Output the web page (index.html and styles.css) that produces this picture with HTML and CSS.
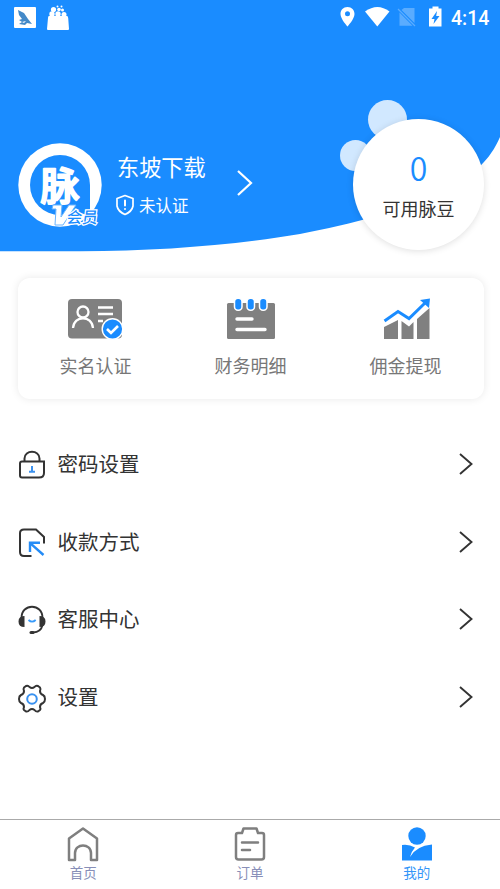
FILE: index.html
```html
<!DOCTYPE html>
<html lang="zh-CN">
<head>
<meta charset="utf-8">
<title>我的</title>
<link rel="stylesheet" href="styles.css">
</head>
<body>
<div class="app">
  <header class="hero">
    <svg class="hero-bg" viewBox="0 0 500 260"><path fill="#1a8cff" d="M0 0H500V137C490 160 474 175 448 188C405 211 352 224 300 234C235 245 160 251 80 251.300H0Z"/></svg>
    <div class="status">
      <svg class="status-apps" viewBox="0 0 60 30" fill="#fff">
        <rect x="0" y="4" width="22" height="21" rx="1"/>
        <path fill="#4389c8" d="M4 7L10 10L14 16L18 21L13 20L11 22L5 21L8 19L5 17L8 16L5 12Z"/>
        <path fill="#fff" d="M8 19L12 18L10 20Z"/>
        <path d="M35 13H53Q54 13 54.200 15L55 26Q55 27 54 27H34Q33 27 33 26L34 15Q34 13 35 13Z"/>
        <circle cx="38" cy="11" r="2.700"/><circle cx="44" cy="11" r="2.700"/><circle cx="50" cy="11.500" r="2.500"/><circle cx="39.500" cy="6.500" r="2.600"/><circle cx="45" cy="6.500" r="1.800"/><circle cx="48.500" cy="7" r="1.500"/><circle cx="43.500" cy="3.500" r="1"/><circle cx="47.500" cy="3.500" r="1"/>
      </svg>
      <svg class="status-icons" viewBox="0 0 110 30" fill="#fff">
        <path fill-rule="evenodd" d="M7.500 4C3.300 4 .5 7 .5 11C.5 16 7.500 23.500 7.500 23.500S14.500 16 14.500 11C14.500 7 11.700 4 7.500 4ZM7.500 8.200A2.500 2.500 0 1 1 7.500 13.200A2.500 2.500 0 1 1 7.500 8.200Z"/>
        <path d="M25 8.500Q37.500-.5 49.500 8.500L37.300 23.500Z"/>
        <path fill="#5aacff" d="M64 5H74.500V20L61.500 7ZM59.500 9.500V22.800H72.500Z"/>
        <path stroke="#5aacff" stroke-width="1.300" d="M58 6L75 23"/>
        <path fill-rule="evenodd" d="M92.500 3.500H98.500V5.500H101.500V23.500H89V5.500H92.500ZM97 8L91.500 16H94.500L93.500 21L99.500 13H96.200Z"/>
      </svg>
      <span class="clock">4:14</span>
    </div>
    <div class="profile">
      <svg class="avatar" viewBox="0 0 84 84">
        <circle cx="42" cy="42" r="41.700" fill="#fff"/>
        <path fill="#1a8cff" d="M42 12A30 30 0 0 1 72 42V72H42A30 30 0 0 1 42 12Z"/>
        <text class="logo-main" x="22.500" y="57">脉</text>
        <path class="logo-v" d="M35 62H44L43 74L51 62H58L45 82H37L38 66H34Z"/>
        <text class="logo-member" transform="translate(48 80) skewX(-8)">会员</text>
      </svg>
      <div class="identity">
        <div class="name">东坡下载</div>
        <div class="verify">
          <svg class="shield" viewBox="0 0 18 22" fill="none" stroke="#fff" stroke-width="1.700" stroke-linejoin="round" stroke-linecap="round"><path d="M9 1.500L17 4.500V12Q16 17.500 9 20.500Q2 17.500 1 12V4.500Z"/><path stroke-width="2" d="M9 6.500V11.500M9 15V15.100"/></svg>
          <span>未认证</span>
        </div>
      </div>
      <svg class="profile-arrow" viewBox="0 0 18 28" fill="none" stroke="#fff" stroke-width="2.200"><path d="M2 2L15 14L2 26"/></svg>
    </div>
    <div class="bubble bubble-large"></div>
    <div class="bubble bubble-small"></div>
    <div class="balance"><div class="amount">0</div><div class="unit">可用脉豆</div></div>
  </header>

  <section class="card">
    <div class="action">
      <svg viewBox="0 0 56 44">
        <rect x="0" y="1" width="54" height="39.500" rx="4" fill="#808080"/>
        <g fill="none" stroke="#fff" stroke-width="2.300"><circle cx="15" cy="14" r="5.500"/><path d="M5 30C6 17 24 17 25 30M30 9.500H45M30 16H45M30 23H35"/></g>
        <circle cx="44.500" cy="31" r="10.300" fill="#1a8cff" stroke="#fff" stroke-width="1.400"/>
        <path d="M39 31L43 35L50 28" fill="none" stroke="#fff" stroke-width="2.600"/>
      </svg>
      <span>实名认证</span>
    </div>
    <div class="action">
      <svg viewBox="0 0 56 44">
        <rect x="4" y="5" width="48" height="36" rx="1.500" fill="#808080"/>
        <g fill="#1a8cff" stroke="#fff" stroke-width="1.500"><rect x="11.500" y=".3" width="7.500" height="12" rx="3.500"/><rect x="24" y=".3" width="7.500" height="12" rx="3.500"/><rect x="36.500" y=".3" width="7.500" height="12" rx="3.500"/></g>
        <path d="M14 21H29M14 31.500H42" stroke="#fff" stroke-width="3.400" stroke-linecap="round"/>
      </svg>
      <span>财务明细</span>
    </div>
    <div class="action">
      <svg viewBox="0 0 56 44" fill="#808080">
        <path d="M6 29L20 22V41H6ZM23.500 23L31 28.500L35.500 24V41H23.500ZM39 21L51.500 10V41H39Z"/>
        <path d="M6.500 23L20 13.500L31 20.500L47 5" fill="none" stroke="#1a8cff" stroke-width="3"/><path fill="#1a8cff" d="M42 2L52 .5L51 10Z"/>
      </svg>
      <span>佣金提现</span>
    </div>
  </section>

  <nav class="menu">
    <div class="row">
      <svg class="row-icon" viewBox="0 0 28 32" fill="none" stroke="#333" stroke-width="2"><path d="M6.500 12V9.500C6.500 .5 21.500 .5 21.500 9.500V12M4 12.500H26V24Q26 28.500 21 28.500H4Q2 28.500 2 26.500V14.500Q2 12.500 4 12.500Z"/><path stroke="#3b91ee" d="M14 17V22.500M11 22.700H17"/></svg>
      <span>密码设置</span>
      <svg class="chevron" viewBox="0 0 14 22"><path d="M1 1L12.500 11L1 21"/></svg>
    </div>
    <div class="row">
      <svg class="row-icon" viewBox="0 0 28 32" fill="none" stroke="#333" stroke-width="2"><path d="M13.500 29H6Q2 29 2 25V6Q2 2.500 6 2.500H18L26 10V16.500"/><path stroke="#258cf6" stroke-width="2.400" d="M12 25V15.800H22M13 16.800L25.500 28"/></svg>
      <span>收款方式</span>
      <svg class="chevron" viewBox="0 0 14 22"><path d="M1 1L12.500 11L1 21"/></svg>
    </div>
    <div class="row">
      <svg class="row-icon" viewBox="0 0 28 32" fill="none" stroke="#333" stroke-width="1.900"><path d="M3.500 14C3.500-1 24.500-1 24.500 14M24.500 21Q23 28 15 28.500"/><path fill="#333" stroke="none" d="M6.500 12V23Q.5 23 .5 17.500Q.5 12 6.500 12ZM21.500 12Q27.500 12 27.500 17.500Q27.500 23 21.500 23Z"/><path stroke-width="3" stroke-linecap="round" d="M13 28.500H15"/><path stroke="#389bfa" stroke-width="1.800" d="M10.500 16Q14 19.300 17.700 16"/></svg>
      <span>客服中心</span>
      <svg class="chevron" viewBox="0 0 14 22"><path d="M1 1L12.500 11L1 21"/></svg>
    </div>
    <div class="row">
      <svg class="row-icon" viewBox="0 0 28 32" fill="none" stroke="#333" stroke-width="2" stroke-linejoin="round"><path d="M8 4Q10 3 11.500 5Q14 7 16.500 5Q18 3 20 4L22 5.500Q23 7 22 9Q22 12 25 13Q27 14 27 17Q27 20 25 21Q22 22 22 25Q23 27 22 28L20 29.500Q18 30 16.500 28Q14 26 11.500 28Q10 30 8 29.500L6 28Q5 27 6 25Q6 22 3 21Q1 20 1 17Q1 14 3 13Q6 12 6 9Q5 7 6 5.500Z"/><circle cx="14" cy="17" r="4.800" stroke="#3991f0"/></svg>
      <span>设置</span>
      <svg class="chevron" viewBox="0 0 14 22"><path d="M1 1L12.500 11L1 21"/></svg>
    </div>
  </nav>

  <footer class="tabs">
    <div class="tab">
      <svg viewBox="0 0 34 36" fill="none" stroke="#7f7f7f" stroke-width="2.500" stroke-linejoin="round"><path d="M3 12.500L17 2.500L31 12.500V34H25V27C25 17 9 17 9 27V34H3Z"/></svg>
      <span>首页</span>
    </div>
    <div class="tab">
      <svg viewBox="0 0 34 36" fill="none" stroke="#7f7f7f" stroke-width="2.500" stroke-linejoin="round" stroke-linecap="round"><path d="M9 7L10.500 2.500H23.500L25 7H29Q31 7 31 9V31Q31 33.500 28.500 33.500H5.500Q3 33.500 3 31V9Q3 7 5 7ZM9 16.500H25M9 24H17"/></svg>
      <span>订单</span>
    </div>
    <div class="tab active">
      <svg viewBox="0 0 34 36" fill="#1a8cff"><circle cx="17" cy="10" r="8.700"/><path d="M2 19Q9 18 15 21.500Q11 26 10 31Q16 20 32 18.500V34.500H2Z"/></svg>
      <span>我的</span>
    </div>
  </footer>
</div>
</body>
</html>
```
FILE: styles.css
```css
* { box-sizing: border-box; }
body {
  margin: 0;
  background: #fff;
  color: #333;
  font-family: "Noto Sans CJK SC", sans-serif;
}
svg { display: block; flex: none; }
.app { display: flex; flex-direction: column; width: 500px; height: 889px; overflow: hidden; }

.hero { position: relative; height: 278px; flex: none; }
.hero-bg { position: absolute; top: 0; left: 0; width: 500px; height: 260px; }
.status { position: relative; display: flex; align-items: center; height: 36px; padding: 0 11px 0 14px; color: #fff; }
.status-apps { width: 60px; height: 30px; }
.status-icons { width: 110px; height: 30px; margin-left: auto; margin-right: 2px; }
.status-icons { position: relative; left: 1px; }
.clock { width: 38px; font: 500 19.500px/37px Roboto, sans-serif; white-space: nowrap; }
.profile { position: relative; display: flex; align-items: center; margin: 107px 0 0 18px; height: 84px; color: #fff; }
.avatar { width: 84px; height: 84px; overflow: visible; }
.logo-main { font-size: 39px; font-weight: 500; fill: #fff; stroke: #fff; stroke-width: 2px; stroke-linejoin: round; }
.logo-v { fill: #fff; stroke: #69b4ff; stroke-width: 1px; }
.logo-member { font-size: 15.500px; font-weight: 500; fill: #1a8cff; stroke: #fff; stroke-width: 2.600px; paint-order: stroke; }
.identity { width: 119px; margin-left: 15px; }
.name { font-size: 22.200px; line-height: 32px; height: 41px; white-space: nowrap; }
.verify { display: flex; align-items: center; gap: 5px; height: 28px; font-size: 16.500px; line-height: 28px; margin-bottom: 1px; }
.shield { width: 18px; height: 22px; margin-left: -1px; }
.profile-arrow { width: 18px; height: 28px; margin-top: -4px; }

.bubble { position: absolute; border-radius: 50%; background: #d1e8ff; }
.bubble-large { left: 368px; top: 100px; width: 39px; height: 39px; }
.bubble-small { left: 340px; top: 140px; width: 31px; height: 31px; }
.balance {
  position: absolute;
  left: 353px;
  top: 119px;
  width: 131px;
  height: 131px;
  padding-top: 27px;
  border-radius: 50%;
  background: #fff;
  box-shadow: 0 1px 7px rgba(0, 0, 0, .13);
  text-align: center;
}
.amount { font-size: 32px; line-height: 42px; height: 44px; color: #1a8cff; font-weight: 350; }
.unit { font-size: 18px; line-height: 36px; }

.card {
  display: grid;
  grid-template-columns: repeat(3, 155px);
  flex: none;
  width: 466px;
  height: 121px;
  margin-left: 18px;
  padding-top: 20px;
  border-radius: 12px;
  background: #fff;
  box-shadow: 0 0 8px rgba(0, 0, 0, .09);
}
.action { display: flex; flex-direction: column; align-items: center; color: #777; font-size: 18px; line-height: 26px; }
.action svg { width: 56px; height: 44px; margin-bottom: 10px; }

.menu { display: flex; flex-direction: column; margin-top: 26px; }
.row { display: flex; align-items: center; height: 77.700px; padding: 0 27px 0 18px; font-size: 20.500px; }
.row-icon { position: relative; top: 1px; width: 28px; height: 32px; margin-right: 11.500px; }
.row span { position: relative; top: -1px; }
.chevron { width: 14px; height: 22px; margin-left: auto; fill: none; stroke: #333; stroke-width: 1.900; }

.tabs { display: grid; grid-template-columns: repeat(3, 1fr); height: 70px; margin-top: auto; border-top: 1px solid #aaa; }
.tab { display: flex; flex-direction: column; align-items: center; padding-top: 6px; color: #888fb8; font-size: 13.500px; line-height: 18px; }
.tab svg { width: 34px; height: 36px; margin-bottom: 1px; }
.active { color: #3295f8; }
```
